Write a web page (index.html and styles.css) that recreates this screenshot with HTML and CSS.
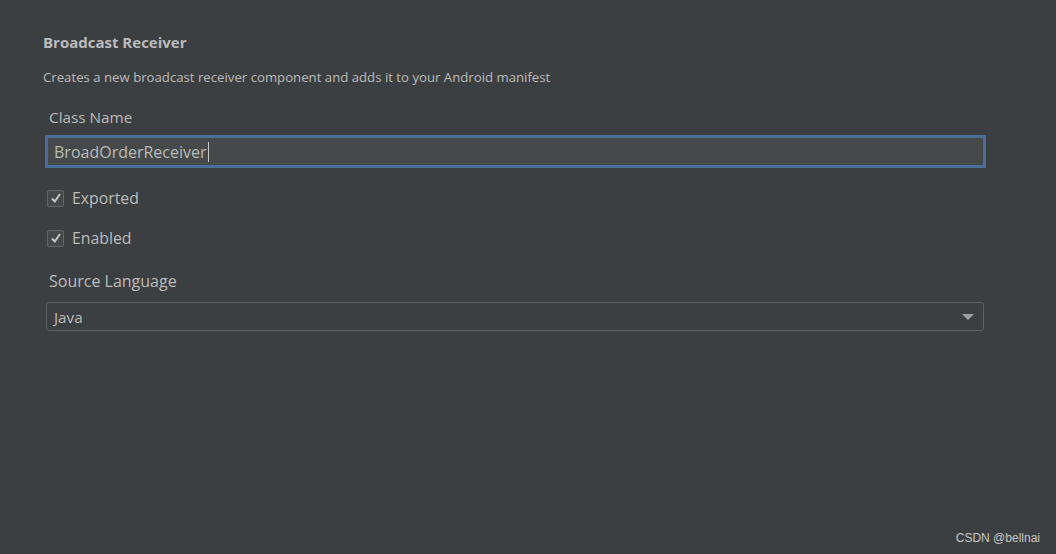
FILE: index.html
```html
<!DOCTYPE html>
<html>
<head>
<meta charset="utf-8">
<link rel="stylesheet" href="styles.css">
</head>
<body>
<div class="page">
  <h1 class="title">Broadcast Receiver</h1>
  <p class="desc">Creates a new broadcast receiver component and adds it to your Android manifest</p>
  <div class="form">
    <div class="label">Class Name</div>
    <div class="textfield"><span class="value">BroadOrderReceiver</span><span class="caret"></span></div>
    <div class="check-row">
      <span class="checkbox"><svg width="12" height="12" viewBox="0 0 12 12"><path d="M2 6.5 L4.8 9.5 L10 2" fill="none" stroke="#c8c8c8" stroke-width="2"/></svg></span>
      <span class="check-label">Exported</span>
    </div>
    <div class="check-row">
      <span class="checkbox"><svg width="12" height="12" viewBox="0 0 12 12"><path d="M2 6.5 L4.8 9.5 L10 2" fill="none" stroke="#c8c8c8" stroke-width="2"/></svg></span>
      <span class="check-label">Enabled</span>
    </div>
    <div class="label label-lang">Source Language</div>
    <div class="combo"><span class="value">Java</span><span class="arrow"></span></div>
  </div>
  <div class="watermark">CSDN @bellnai</div>
</div>
</body>
</html>
```
FILE: styles.css
```css
html, body {
  margin: 0;
  padding: 0;
  background: #3c3f41;
}
body {
  width: 1056px;
  height: 554px;
  overflow: hidden;
  font-family: "Open Sans", "Noto Sans", sans-serif;
  color: #bbbbbb;
}
.page {
  position: relative;
  width: 1056px;
  height: 554px;
  padding: 32px 0 0 43px;
  box-sizing: border-box;
}
.title {
  margin: 0;
  font-size: 15px;
  font-weight: 700;
  line-height: 20px;
  color: #bbbbbb;
}
.desc {
  margin: 16px 0 0 0;
  font-size: 13.2px;
  line-height: 18px;
  color: #bbbbbb;
}
.form {
  padding-left: 2px;
  width: 941px;
}
.label {
  margin: 21px 0 0 4px;
  font-size: 15.3px;
  line-height: 20px;
}
.textfield {
  margin-top: 8px;
  height: 33px;
  box-sizing: border-box;
  border: 3px solid #486f98;
  background: #45494a;
  display: flex;
  align-items: center;
  padding-left: 6px;
  font-size: 16px;
  color: #bbbbbb;
}
.caret {
  display: inline-block;
  width: 1px;
  height: 20px;
  background: #c8c8c8;
  margin-left: 1px;
}
.check-row {
  display: flex;
  align-items: center;
  height: 20px;
  margin-left: 2px;
  margin-top: 20px;
}
.check-row + .check-row {
  margin-top: 20px;
}
.checkbox {
  width: 17px;
  height: 17px;
  box-sizing: border-box;
  border: 1px solid #636667;
  border-radius: 2px;
  background: #43494a;
  display: flex;
  align-items: center;
  justify-content: center;
}
.check-label {
  margin-left: 8px;
  font-size: 15.8px;
}
.label-lang {
  margin-top: 23px;
  font-size: 16px;
}
.combo {
  margin-top: 11px;
  margin-left: 1px;
  width: 938px;
  height: 29px;
  box-sizing: border-box;
  border: 1px solid #5e6060;
  border-radius: 3px;
  display: flex;
  align-items: center;
  justify-content: space-between;
  padding: 0 9px 0 7px;
  font-size: 15.3px;
}
.arrow {
  width: 0;
  height: 0;
  border-left: 6px solid transparent;
  border-right: 6px solid transparent;
  border-top: 6px solid #a0a2a4;
}
.watermark {
  position: absolute;
  right: 16px;
  bottom: 9px;
  font-family: "Liberation Sans", sans-serif;
  font-size: 12px;
  color: #c6c6c6;
}
```
